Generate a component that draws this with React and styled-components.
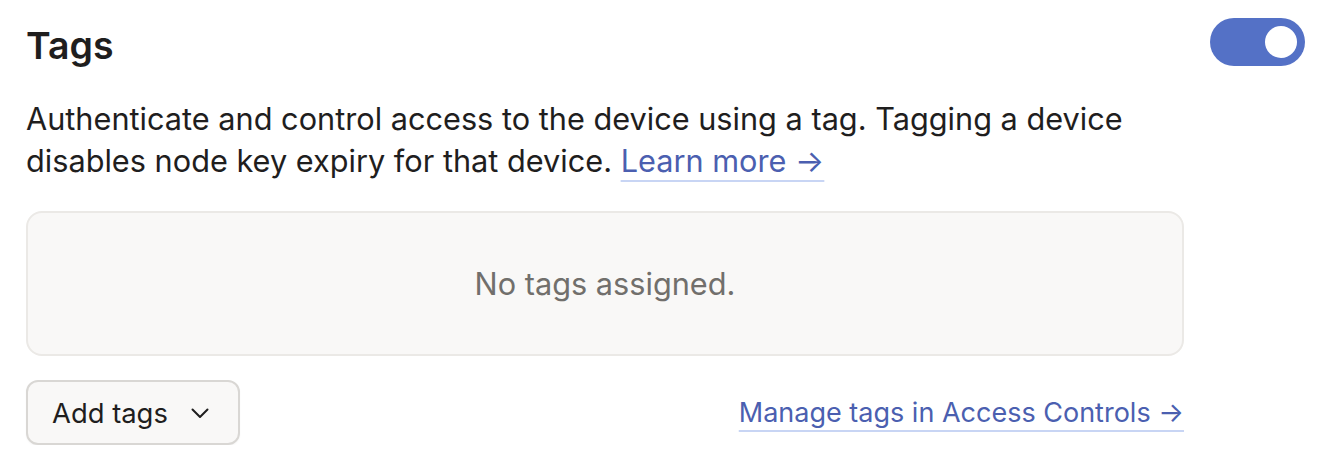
import React from "react";
import styled, { createGlobalStyle } from "styled-components";

const GlobalStyle = createGlobalStyle`
  html, body {
    margin: 0;
    padding: 0;
    background: #ffffff;
  }
  body {
    font-family: Inter, "Noto Sans", "Liberation Sans", sans-serif;
    color: #1f1e1e;
  }
`;

const Page = styled.div`
  display: flex;
  align-items: flex-start;
  gap: 26px;
  padding: 22px 23px 0 26px;
`;

const Main = styled.div`
  width: 1158px;
  display: flex;
  flex-direction: column;
`;

const Title = styled.h2`
  margin: 0;
  font-size: 37.5px;
  line-height: 48px;
  font-weight: 600;
`;

const Description = styled.p`
  margin: 28px 0 0;
  font-size: 30.7px;
  line-height: 42px;
  width: 1120px;
`;

const Link = styled.a`
  color: #4b5fb0;
  font-size: ${(p) => p.size || "30.7px"};
  text-decoration: underline;
  text-decoration-color: #c8d5f4;
  text-decoration-thickness: 2px;
  text-underline-offset: 8px;
  text-decoration-skip-ink: none;
  cursor: pointer;
`;

const EmptyBox = styled.div`
  margin-top: 29px;
  height: 141px;
  border: 2px solid #ebe9e6;
  border-radius: 16px;
  background: #f9f8f7;
  display: flex;
  align-items: center;
  justify-content: center;
  font-size: 30.7px;
  color: #716f6c;
`;

const Footer = styled.div`
  margin-top: 24px;
  display: flex;
  align-items: center;
  justify-content: space-between;
`;

const DropButton = styled.button`
  height: 65px;
  width: 214px;
  box-sizing: border-box;
  border: 2px solid #d9d7d4;
  border-radius: 12px;
  background: #f9f8f7;
  display: flex;
  align-items: center;
  gap: 22px;
  padding: 0 0 0 24px;
  font-family: inherit;
  font-size: 27.4px;
  color: #1f1e1e;
  cursor: pointer;
  box-shadow: 0 1px 2px rgba(0, 0, 0, 0.04);
`;

const Toggle = styled.div`
  margin-top: -4px;
  width: 95px;
  height: 48px;
  border-radius: 24px;
  background: #5471c6;
  display: flex;
  align-items: center;
  justify-content: ${(p) => (p.on ? "flex-end" : "flex-start")};
  padding: 0 8px;
  box-sizing: border-box;
  flex-shrink: 0;
`;

const Knob = styled.div`
  width: 32px;
  height: 32px;
  border-radius: 50%;
  background: #ffffff;
`;

const Chevron = () => (
  <svg width="20" height="20" viewBox="0 0 20 20" fill="none">
    <path d="M2.5 6.5l7.5 7.5 7.5-7.5" stroke="#1f1e1e" strokeWidth="2" strokeLinecap="round" strokeLinejoin="round" />
  </svg>
);

export default function App() {
  return (
    <>
      <GlobalStyle />
      <Page>
        <Main>
          <Title>Tags</Title>
          <Description>
            Authenticate and control access to the device using a tag. Tagging a device
            disables node key expiry for that device. <Link>Learn more →</Link>
          </Description>
          <EmptyBox>No tags assigned.</EmptyBox>
          <Footer>
            <DropButton>
              Add tags
              <Chevron />
            </DropButton>
            <Link size="27px">Manage tags in Access Controls →</Link>
          </Footer>
        </Main>
        <Toggle on>
          <Knob />
        </Toggle>
      </Page>
    </>
  );
}
